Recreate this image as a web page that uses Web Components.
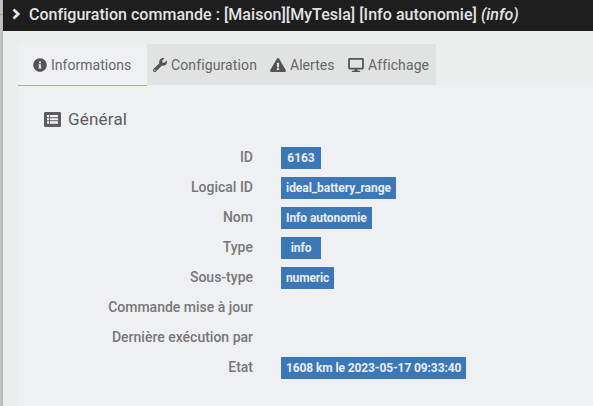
<!DOCTYPE html>
<html lang="fr">
<head>
<meta charset="utf-8">
<title>Configuration commande</title>
<style>
	html, body { margin: 0; height: 100%; overflow: hidden; }
	body { font-family: Roboto, "Liberation Sans", sans-serif; font-size: 14px; color: #666; }
</style>
</head>
<body>
<command-dialog>
	<span slot="title">Configuration commande : [Maison][MyTesla] [Info autonomie] <em>(info)</em></span>
	<tab-item slot="tabs" icon="info" active style="--label-width: 81px">Informations</tab-item>
	<tab-item slot="tabs" icon="wrench" style="--label-width: 86px; --tracking: 0.12px">Configuration</tab-item>
	<tab-item slot="tabs" icon="warning" style="--label-width: 45px">Alertes</tab-item>
	<tab-item slot="tabs" icon="desktop" style="--label-width: 61px; --tracking: 0.1px">Affichage</tab-item>
	<info-section heading="Général">
		<info-row label="ID"><value-badge>6163</value-badge></info-row>
		<info-row label="Logical ID"><value-badge style="--tracking: -0.04px">ideal_battery_range</value-badge></info-row>
		<info-row label="Nom"><value-badge>Info autonomie</value-badge></info-row>
		<info-row label="Type"><value-badge>info</value-badge></info-row>
		<info-row label="Sous-type"><value-badge style="--tracking: -0.14px">numeric</value-badge></info-row>
		<info-row label="Commande mise à jour"></info-row>
		<info-row label="Dernière exécution par"></info-row>
		<info-row label="Etat"><value-badge style="--tracking: -0.11px">1608 km le 2023-05-17 09:33:40</value-badge></info-row>
	</info-section>
</command-dialog>

<script>
const ICONS = {
	chevron: { box: "0 0 9 12", width: 9, height: 12, body: '<path d="M1.5 1.5 6.2 6l-4.7 4.5" fill="none" stroke="currentColor" stroke-width="2.8"/>' },
	info: { box: "0 0 512 512", width: 14, height: 14, body: '<path d="M256 8C119 8 8 119 8 256s111 248 248 248 248-111 248-248S393 8 256 8zm0 110a42 42 0 1 1 0 84 42 42 0 0 1 0-84zm56 254c0 7-5 12-12 12h-88c-7 0-12-5-12-12v-24c0-7 5-12 12-12h12v-64h-12c-7 0-12-5-12-12v-24c0-7 5-12 12-12h64c7 0 12 5 12 12v100h12c7 0 12 5 12 12z"/>' },
	wrench: { box: "0 0 512 512", width: 14, height: 14, body: '<path d="M507.73 109.1c-2.24-9.03-13.54-12.09-20.12-5.51l-74.36 74.36-67.88-11.31-11.31-67.88 74.36-74.36c6.62-6.62 3.43-17.9-5.66-20.16-47.38-11.74-99.55.91-136.58 37.93-39.64 39.64-50.55 97.1-34.05 147.2L18.74 402.76c-24.99 24.99-24.99 65.51 0 90.5s65.51 24.99 90.5 0l213.21-213.21c50.12 16.71 107.47 5.68 147.37-34.22 37.07-37.07 49.7-89.32 37.91-136.73zM64 472a24 24 0 1 1 0-48 24 24 0 0 1 0 48z"/>' },
	warning: { box: "0 0 576 512", width: 16, height: 14, body: '<path d="M569.52 440c18.46 32-4.7 72-41.58 72H48.05c-36.93 0-60-40.05-41.57-72L246.42 24c18.47-32 64.72-32 83.16 0zM288 354a46 46 0 1 0 0 92 46 46 0 0 0 0-92zm-43.67-165.35 7.41 136c.35 6.37 5.61 11.35 11.99 11.35h48.54c6.38 0 11.64-4.98 11.99-11.35l7.41-136c.38-6.87-5.1-12.65-11.98-12.65h-61.38c-6.88 0-12.36 5.78-11.98 12.65z"/>' },
	desktop: { box: "0 0 576 512", width: 16, height: 14, body: '<path d="M528 0H48C21.5 0 0 21.5 0 48v320c0 26.5 21.5 48 48 48h192l-16 48h-72a24 24 0 0 0 0 48h272a24 24 0 0 0 0-48h-72l-16-48h192c26.5 0 48-21.5 48-48V48c0-26.5-21.5-48-48-48zm-16 352H64V64h448z"/>' },
	list: { box: "0 0 17 15", width: 17, height: 15, body: '<rect width="17" height="15" rx="1.3"/><path fill="#eff0f3" d="M3 3h11v2.2H3zM3 6.2h11v2H3zM3 9.2h11v2.5H3z"/><path d="M5 3h.8v9H5z"/>' }
};

class UiIcon extends HTMLElement {
	connectedCallback() {
		const icon = ICONS[this.getAttribute("name")];
		this.attachShadow({ mode: "open" }).innerHTML = `
			<style>
				:host { display: block; flex: none; }
				svg { display: block; fill: currentColor; }
			</style>
			<svg viewBox="${icon.box}" width="${icon.width}" height="${icon.height}" aria-hidden="true">${icon.body}</svg>
		`;
	}
}

class CommandDialog extends HTMLElement {
	connectedCallback() {
		this.attachShadow({ mode: "open" }).innerHTML = `
			<style>
				:host {
					display: grid;
					grid-template-columns: 3px 1fr;
					height: 100%;
				}

				/* strip of the page left visible behind the dialog */
				.backdrop {
					background: linear-gradient(#8ebe38, #8ebe38) 0 14px / 3px 1px no-repeat,
						linear-gradient(90deg, #c8c8c8, #b4b4b4);
				}

				.dialog { display: flex; flex-direction: column; min-width: 0; background: #eceeed; }

				header {
					display: flex;
					align-items: center;
					box-sizing: border-box;
					height: 31px;
					padding: 0 0 3px 9px;
					gap: 8px;
					background: #1e1e1e;
					color: #e3e3e3;
					font-size: 16px;
					font-weight: 500;
					letter-spacing: 0.035px;
					white-space: nowrap;
				}

				nav { display: flex; align-items: flex-start; height: 41px; padding: 13px 0 0 15px; z-index: 1; }
				main { flex: 1; margin-left: 15px; background: #eff0f3; }
			</style>
			<div class="backdrop"></div>
			<div class="dialog">
				<header><ui-icon name="chevron"></ui-icon><slot name="title"></slot></header>
				<nav><slot name="tabs"></slot></nav>
				<main><slot></slot></main>
			</div>
		`;
	}
}

class TabItem extends HTMLElement {
	connectedCallback() {
		this.attachShadow({ mode: "open" }).innerHTML = `
			<style>
				:host {
					display: flex;
					align-items: center;
					box-sizing: border-box;
					height: 41px;
					padding: 0 7px 0 6px;
					gap: 4px;
					background: #e1e3e2;
					color: #666;
					letter-spacing: var(--tracking, 0.03px);
					white-space: nowrap;
				}

				:host([active]) {
					height: 42px;
					padding: 0 15px;
					border-bottom: 1px solid #94ca32;
					background: #eff0f3;
				}

				ui-icon { color: #545454; }
				span { width: var(--label-width); }
			</style>
			<ui-icon name="${this.getAttribute("icon")}"></ui-icon>
			<span><slot></slot></span>
		`;
	}
}

class InfoSection extends HTMLElement {
	connectedCallback() {
		this.attachShadow({ mode: "open" }).innerHTML = `
			<style>
				:host { display: block; padding: 23px 0 0 26px; }

				h2 {
					display: flex;
					align-items: center;
					gap: 7px;
					height: 22px;
					margin: 0 0 12px;
					color: #5c5c5c;
					font-size: 17px;
					font-weight: 400;
					letter-spacing: 0.2px;
				}
			</style>
			<h2><ui-icon name="list"></ui-icon><span>${this.getAttribute("heading")}</span></h2>
			<slot></slot>
		`;
	}
}

class InfoRow extends HTMLElement {
	connectedCallback() {
		this.attachShadow({ mode: "open" }).innerHTML = `
			<style>
				:host {
					display: grid;
					grid-template-columns: 209px 1fr;
					column-gap: 28px;
					align-items: center;
					height: 30px;
				}

				label {
					padding-bottom: 1px;
					color: #777;
					font-weight: 500;
					text-align: right;
				}

				div { padding-top: 2px; }
			</style>
			<label>${this.getAttribute("label")}</label>
			<div><slot></slot></div>
		`;
	}
}

class ValueBadge extends HTMLElement {
	connectedCallback() {
		this.attachShadow({ mode: "open" }).innerHTML = `
			<style>
				:host {
					display: block;
					box-sizing: border-box;
					width: fit-content;
					min-width: 40px;
					height: 22px;
					padding: 0 5px;
					background: #3c78b5;
					color: #e9edf2;
					font-size: 12px;
					font-weight: 700;
					letter-spacing: var(--tracking, -0.07px);
					line-height: 22px;
					text-align: center;
					white-space: nowrap;
				}
			</style>
			<slot></slot>
		`;
	}
}

customElements.define("ui-icon", UiIcon);
customElements.define("command-dialog", CommandDialog);
customElements.define("tab-item", TabItem);
customElements.define("info-section", InfoSection);
customElements.define("info-row", InfoRow);
customElements.define("value-badge", ValueBadge);
</script>
</body>
</html>
